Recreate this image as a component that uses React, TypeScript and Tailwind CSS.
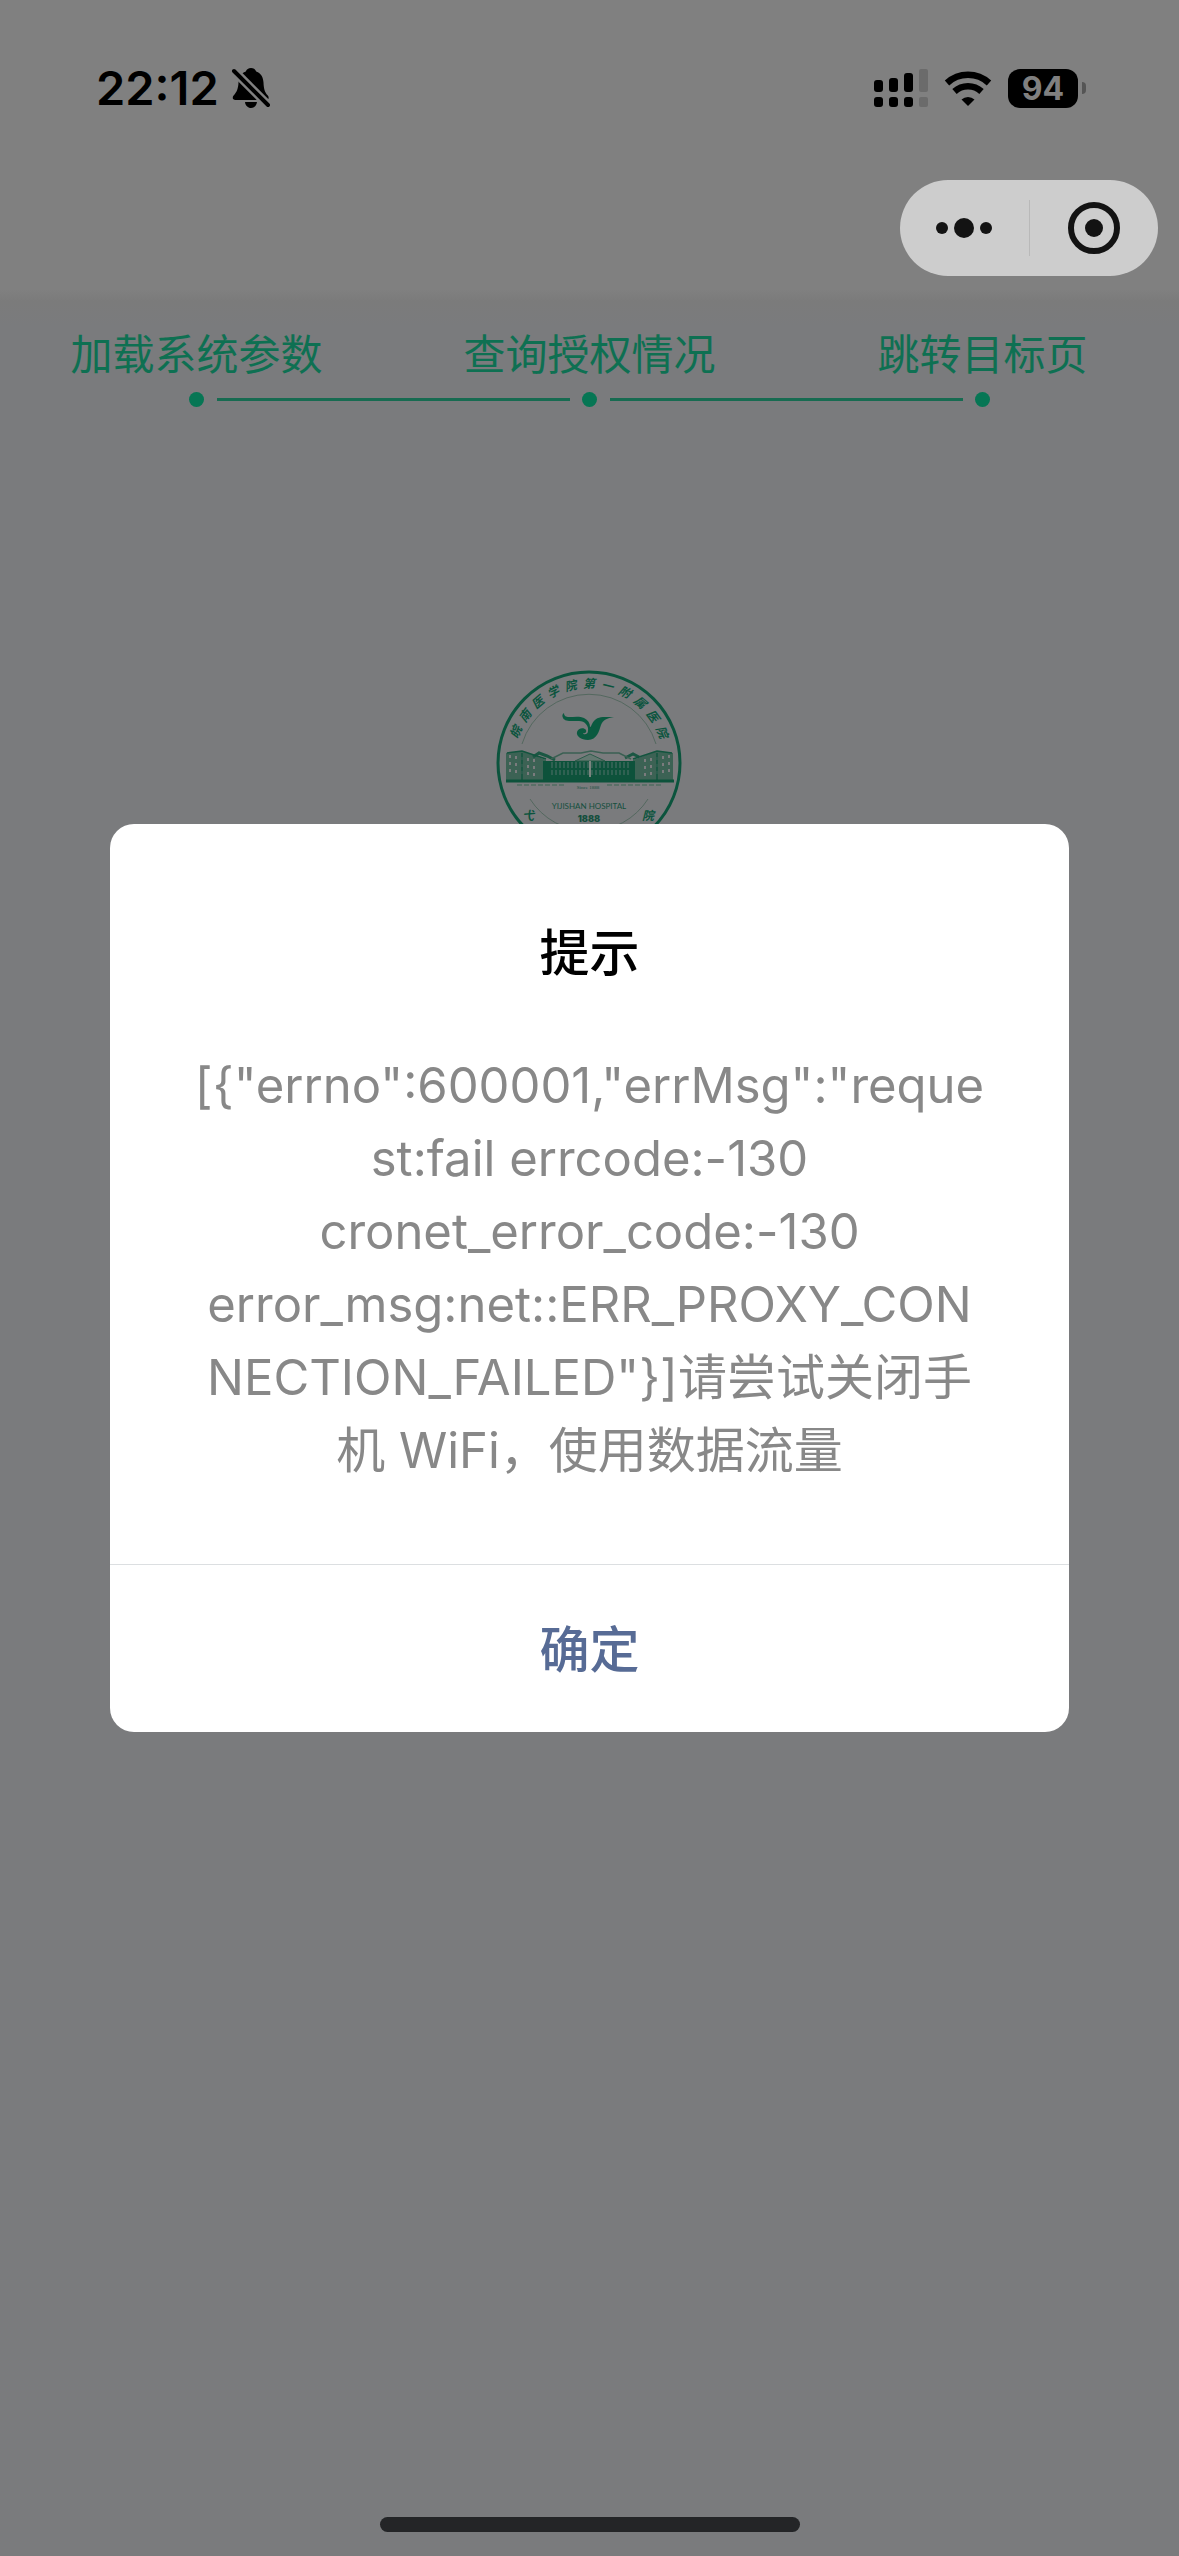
const steps = ["加载系统参数", "查询授权情况", "跳转目标页"];

function MutedBell() {
  return (
    <svg viewBox="0 0 40 42" className="h-[42px] w-10" role="img" aria-label="静音">
      <path
        d="M20 1c2.600 0 4.400 1.400 5.200 3.400 5 1.800 7 6 7.300 11.200.3 6 1 9.500 4.300 13 1.600 1.900.9 4.400-1.800 4.400H4.400c-2.700 0-3.400-2.500-1.800-4.400 3.300-3.500 4.600-7 4.900-13 .3-5.200 2.300-9.400 7.300-11.200C15.600 2.400 17.400 1 20 1Z"
        fill="#000"
      />
      <path d="M14 35h12c-.4 3.500-2.800 6-6 6s-5.600-2.500-6-6Z" fill="#000" />
      <path d="M3 4 37 38" stroke="#808080" strokeWidth="9" />
      <path d="M3 4 37 38" stroke="#000" strokeWidth="4" strokeLinecap="round" />
    </svg>
  );
}

function Signal() {
  return (
    <svg viewBox="0 0 54 40" className="h-10 w-[54px]" role="img" aria-label="信号">
      <g fill="#000">
        <rect x="0" y="12" width="9" height="12" rx="3" />
        <rect x="15" y="10" width="9" height="14" rx="3" />
        <rect x="30" y="5" width="9" height="19" rx="3" />
        <rect x="0" y="29" width="9" height="10" rx="3" />
        <rect x="15" y="29" width="9" height="10" rx="3" />
        <rect x="30" y="29" width="9" height="10" rx="3" />
      </g>
      <g fill="#6b6b6b">
        <rect x="45" y="1" width="9" height="23" rx="2" />
        <rect x="45" y="29" width="9" height="10" rx="2" />
      </g>
    </svg>
  );
}

function Wifi() {
  return (
    <svg viewBox="0 0 48 36" className="h-9 w-12" role="img" aria-label="无线网络">
      <g fill="none" stroke="#000" strokeWidth="6.500">
        <path d="M3 13a31 31 0 0 1 42 0" />
        <path d="M10.500 21.500a20 20 0 0 1 27 0" />
      </g>
      <path d="M24 36l-6.500-6.500a9.500 9.500 0 0 1 13 0Z" fill="#000" />
    </svg>
  );
}

function Emblem() {
  const top = ["皖", "南", "医", "学", "院", "第", "一", "附", "属", "医", "院"];
  const columns = Array.from({ length: 20 }, (_, i) => 57 + i * 4);
  const wing = [0, 1, 2, 3, 4];
  return (
    <svg viewBox="0 0 190 190" className="size-[190px]" role="img" aria-label="弋矶山医院">
      <circle cx="94" cy="94" r="91" fill="none" stroke="#0b543d" strokeWidth="3" />
      <g fill="none" stroke="#54685f" strokeWidth="1">
        <path d="M27 75a70 70 0 0 1 134 0" />
        <path d="M35 130a70 70 0 0 0 118 0" />
      </g>
      <g
        fill="#0b543d"
        fontSize="12"
        fontWeight="700"
        fontStyle="italic"
        textAnchor="middle"
        className="font-['Noto_Sans_CJK_SC',sans-serif]"
      >
        {top.map((c, i) => (
          <text key={i} x="94" y="19" transform={`rotate(${-67 + i * 13.400} 94 94)`}>
            {c}
          </text>
        ))}
        <text x="33" y="151">弋</text>
        <text x="153" y="151">院</text>
      </g>
      <path
        d="M69 44c0 3 2 4 5 4 5 0 11-1 15 1 4 2 6 5 6 9 1 0 1-1 2-3 3-6 7-7 13-7l9 0c-7 1-11 3-13 8-2 6-4 15-13 15-7 0-12-4-11-8 1-4 7-5 9-2 1 2-1 4-3 3 0 2 5 2 5-2 1-5-3-10-9-10-7 0-14 1-16-3-1-2-1-4 1-5Z"
        fill="#0b5a40"
      />
      <g>
        <path d="M11 84l16-2 24 9v22H11Z" fill="#3c6254" />
        <path d="M178 84l-16-2-24 9v22h40Z" fill="#3c6254" />
        <path d="M38 88l6-4 8 3 8 4M130 89l8-4 6 3" stroke="#1b5743" strokeWidth="3" fill="none" />
        <path d="M48 92h92v20H48Z" fill="#0d523b" />
        <path d="M56 90l12-6h18l10-2 12 2h16l12 6" fill="none" stroke="#3b6053" strokeWidth="1.500" />
        <path d="M80 92l15-7 15 7Z" fill="#647871" stroke="#2d5c4b" strokeWidth="1" />
        {columns.map((x) => (
          <path key={x} d={`M${x} 93v6m0 2v5`} stroke="#53706a" strokeWidth="1" />
        ))}
        {wing.map((i) => (
          <g key={i} stroke="#7a7b7d" strokeWidth="2" strokeDasharray="3 4">
            <path d={`M${15 + i * 6} ${86 + i}v20`} />
            <path d={`M${174 - i * 6} ${86 + i}v20`} />
          </g>
        ))}
        <path d="M12 84l15-2 24 8M177 84l-15-2-24 8M27 84v27M162 84v27" fill="none" stroke="#12543e" strokeWidth="1.500" />
        <path d="M95 92v16" stroke="#7a857f" strokeWidth="2" />
        <path d="M11 112h168" stroke="#0d523b" strokeWidth="3" />
        <path d="M22 116h48M112 116h56" stroke="#5b7068" strokeWidth="2" strokeDasharray="5 2" />
      </g>
      <g fill="#154f3d" textAnchor="middle">
        <text x="93" y="120" fontSize="5" className="font-['Liberation_Serif',serif]">Since 1888</text>
        <text x="94" y="140" fontSize="8" className="font-[Lato,sans-serif]">YIJISHAN HOSPITAL</text>
        <text x="94" y="153" fontSize="9" fontWeight="900" className="font-[Inter,sans-serif]">1888</text>
      </g>
    </svg>
  );
}

export default function App() {
  return (
    <div className="relative min-h-screen bg-[#7a7b7d] font-[Inter,'Noto_Sans_CJK_SC',sans-serif]">
      <header className="h-[290px] bg-[#808080]">
        <div className="flex items-center justify-between pt-16 pr-[93px] pl-24">
          <div className="flex items-center gap-3">
            <time className="text-[47px] leading-[48px] font-semibold text-black">22:12</time>
            <MutedBell />
          </div>
          <div className="flex items-center">
            <Signal />
            <div className="ml-4">
              <Wifi />
            </div>
            <div className="ml-4 flex items-center gap-1">
              <span className="flex h-[39px] w-[70px] items-center justify-center rounded-xl bg-black text-[32px] leading-[39px] font-bold text-[#808080]">
                94
              </span>
              <span className="h-3 w-1 rounded-r-full bg-[#555]" />
            </div>
          </div>
        </div>
      </header>

      <div className="absolute top-[180px] right-[21px] z-20 flex h-24 w-[258px] items-center rounded-full bg-[#cdcdcd]">
        <button type="button" aria-label="更多" className="flex flex-1 items-center justify-center gap-1.5">
          <span className="size-3 rounded-full bg-[#131313]" />
          <span className="size-5 rounded-full bg-[#131313]" />
          <span className="size-3 rounded-full bg-[#131313]" />
        </button>
        <span className="h-14 w-px bg-[#b9b9b9]" />
        <button type="button" aria-label="关闭" className="flex flex-1 items-center justify-center">
          <span className="flex size-[52px] items-center justify-center rounded-full border-6 border-[#131313]">
            <span className="size-[18px] rounded-full bg-[#131313]" />
          </span>
        </button>
      </div>

      <main>
        <div className="h-9 bg-linear-to-b from-[#808080] via-[#7b7b7b] via-30% to-[#7a7b7d]" />
        <ol className="grid grid-cols-3">
          {steps.map((label, i) => (
            <li key={label} className="flex flex-col items-center text-[42px] leading-[58px] text-[#0e7052]">
              <span>{label}</span>
              <span className="relative mt-[7px] flex h-4 w-full items-center justify-center">
                <span className="size-[15px] rounded-full bg-[#067654]" />
                {i < steps.length - 1 && (
                  <span className="absolute left-1/2 ml-5 h-[3px] w-[calc(100%-40px)] bg-[#176b51]" />
                )}
              </span>
            </li>
          ))}
        </ol>
        <div className="flex justify-center pt-[262px]">
          <Emblem />
        </div>
      </main>

      <div className="absolute inset-0 z-10 flex items-center justify-center px-[110px]">
        <section role="dialog" aria-labelledby="dialog-title" className="w-full rounded-3xl bg-white text-center">
          <h1 id="dialog-title" className="pt-[94px] text-[50px] leading-[70px] font-medium text-black">
            提示
          </h1>
          <p className="pt-[61px] pb-[77px] text-[49px] leading-[73px] text-[#888]">
            [{"{"}"errno":600001,"errMsg":"reque
            <br />
            st:fail errcode:-130
            <br />
            cronet_error_code:-130
            <br />
            error_msg:net::ERR_PROXY_CON
            <br />
            NECTION_FAILED"{"}"}]请尝试关闭手
            <br />
            机 WiFi，使用数据流量
          </p>
          <button
            type="button"
            className="h-[168px] w-full border-t border-[#dcdfe1] pt-1 text-[50px] font-medium text-[#576b95]"
          >
            确定
          </button>
        </section>
      </div>

      <div className="absolute inset-x-0 bottom-6 z-20 flex justify-center">
        <span className="h-[15px] w-[420px] rounded-full bg-[#242527]" />
      </div>
    </div>
  );
}
